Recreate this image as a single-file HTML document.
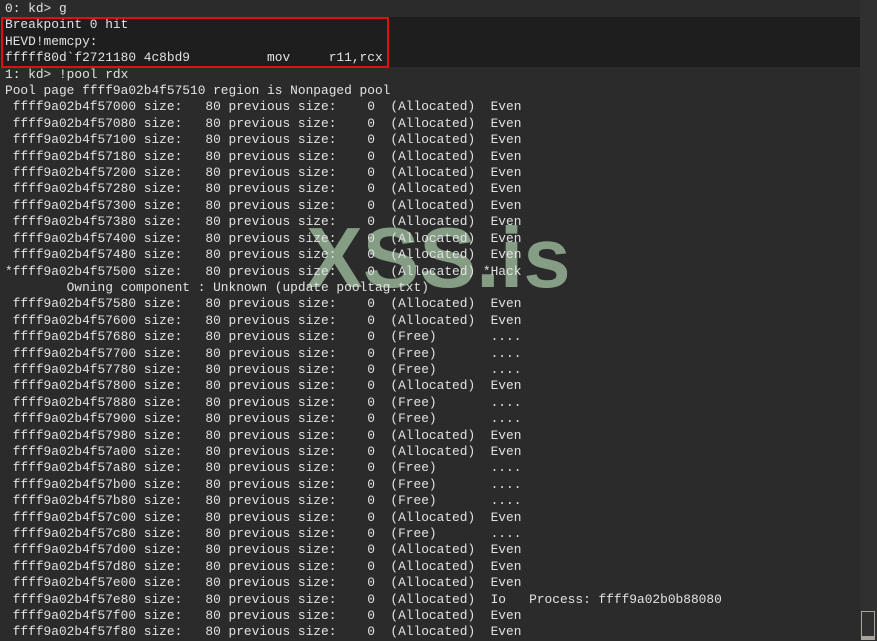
<!DOCTYPE html>
<html><head><meta charset="utf-8"><style>
html,body{margin:0;padding:0;width:877px;height:640px;overflow:hidden;background:#2b2b2b;}
#wm{position:absolute;left:306px;top:209px;font:bold 85px "Liberation Sans",sans-serif;color:#859d84;line-height:100px;z-index:0;}
#band{position:absolute;left:0;top:17px;width:860px;height:50px;background:#1e1e1e;}
#box{position:absolute;left:1px;top:17px;width:384px;height:47px;border:2px solid #e01010;z-index:3;}
#sb{position:absolute;left:860px;top:0;width:17px;height:640px;background:#303030;}
#thumb{position:absolute;left:861px;top:611px;width:12px;height:24px;border:1px solid #a8a49c;}
#thumb2{position:absolute;left:861px;top:637px;width:14px;height:3px;background:#a8a49c;}
pre{position:absolute;left:5px;top:1px;margin:0;font:12.85px/16.4px "Liberation Mono",monospace;color:#e2e2e2;z-index:2;white-space:pre;}
</style></head><body>
<div id="band"></div>
<div id="wm">XSS.is</div>
<div id="sb"></div><div id="thumb"></div><div id="thumb2"></div>
<div id="box"></div>
<pre>0: kd&gt; g
Breakpoint 0 hit
HEVD!memcpy:
fffff80d`f2721180 4c8bd9          mov     r11,rcx
1: kd&gt; !pool rdx
Pool page ffff9a02b4f57510 region is Nonpaged pool
 ffff9a02b4f57000 size:   80 previous size:    0  (Allocated)  Even
 ffff9a02b4f57080 size:   80 previous size:    0  (Allocated)  Even
 ffff9a02b4f57100 size:   80 previous size:    0  (Allocated)  Even
 ffff9a02b4f57180 size:   80 previous size:    0  (Allocated)  Even
 ffff9a02b4f57200 size:   80 previous size:    0  (Allocated)  Even
 ffff9a02b4f57280 size:   80 previous size:    0  (Allocated)  Even
 ffff9a02b4f57300 size:   80 previous size:    0  (Allocated)  Even
 ffff9a02b4f57380 size:   80 previous size:    0  (Allocated)  Even
 ffff9a02b4f57400 size:   80 previous size:    0  (Allocated)  Even
 ffff9a02b4f57480 size:   80 previous size:    0  (Allocated)  Even
*ffff9a02b4f57500 size:   80 previous size:    0  (Allocated) *Hack
        Owning component : Unknown (update pooltag.txt)
 ffff9a02b4f57580 size:   80 previous size:    0  (Allocated)  Even
 ffff9a02b4f57600 size:   80 previous size:    0  (Allocated)  Even
 ffff9a02b4f57680 size:   80 previous size:    0  (Free)       ....
 ffff9a02b4f57700 size:   80 previous size:    0  (Free)       ....
 ffff9a02b4f57780 size:   80 previous size:    0  (Free)       ....
 ffff9a02b4f57800 size:   80 previous size:    0  (Allocated)  Even
 ffff9a02b4f57880 size:   80 previous size:    0  (Free)       ....
 ffff9a02b4f57900 size:   80 previous size:    0  (Free)       ....
 ffff9a02b4f57980 size:   80 previous size:    0  (Allocated)  Even
 ffff9a02b4f57a00 size:   80 previous size:    0  (Allocated)  Even
 ffff9a02b4f57a80 size:   80 previous size:    0  (Free)       ....
 ffff9a02b4f57b00 size:   80 previous size:    0  (Free)       ....
 ffff9a02b4f57b80 size:   80 previous size:    0  (Free)       ....
 ffff9a02b4f57c00 size:   80 previous size:    0  (Allocated)  Even
 ffff9a02b4f57c80 size:   80 previous size:    0  (Free)       ....
 ffff9a02b4f57d00 size:   80 previous size:    0  (Allocated)  Even
 ffff9a02b4f57d80 size:   80 previous size:    0  (Allocated)  Even
 ffff9a02b4f57e00 size:   80 previous size:    0  (Allocated)  Even
 ffff9a02b4f57e80 size:   80 previous size:    0  (Allocated)  Io   Process: ffff9a02b0b88080
 ffff9a02b4f57f00 size:   80 previous size:    0  (Allocated)  Even
 ffff9a02b4f57f80 size:   80 previous size:    0  (Allocated)  Even</pre>
</body></html>
